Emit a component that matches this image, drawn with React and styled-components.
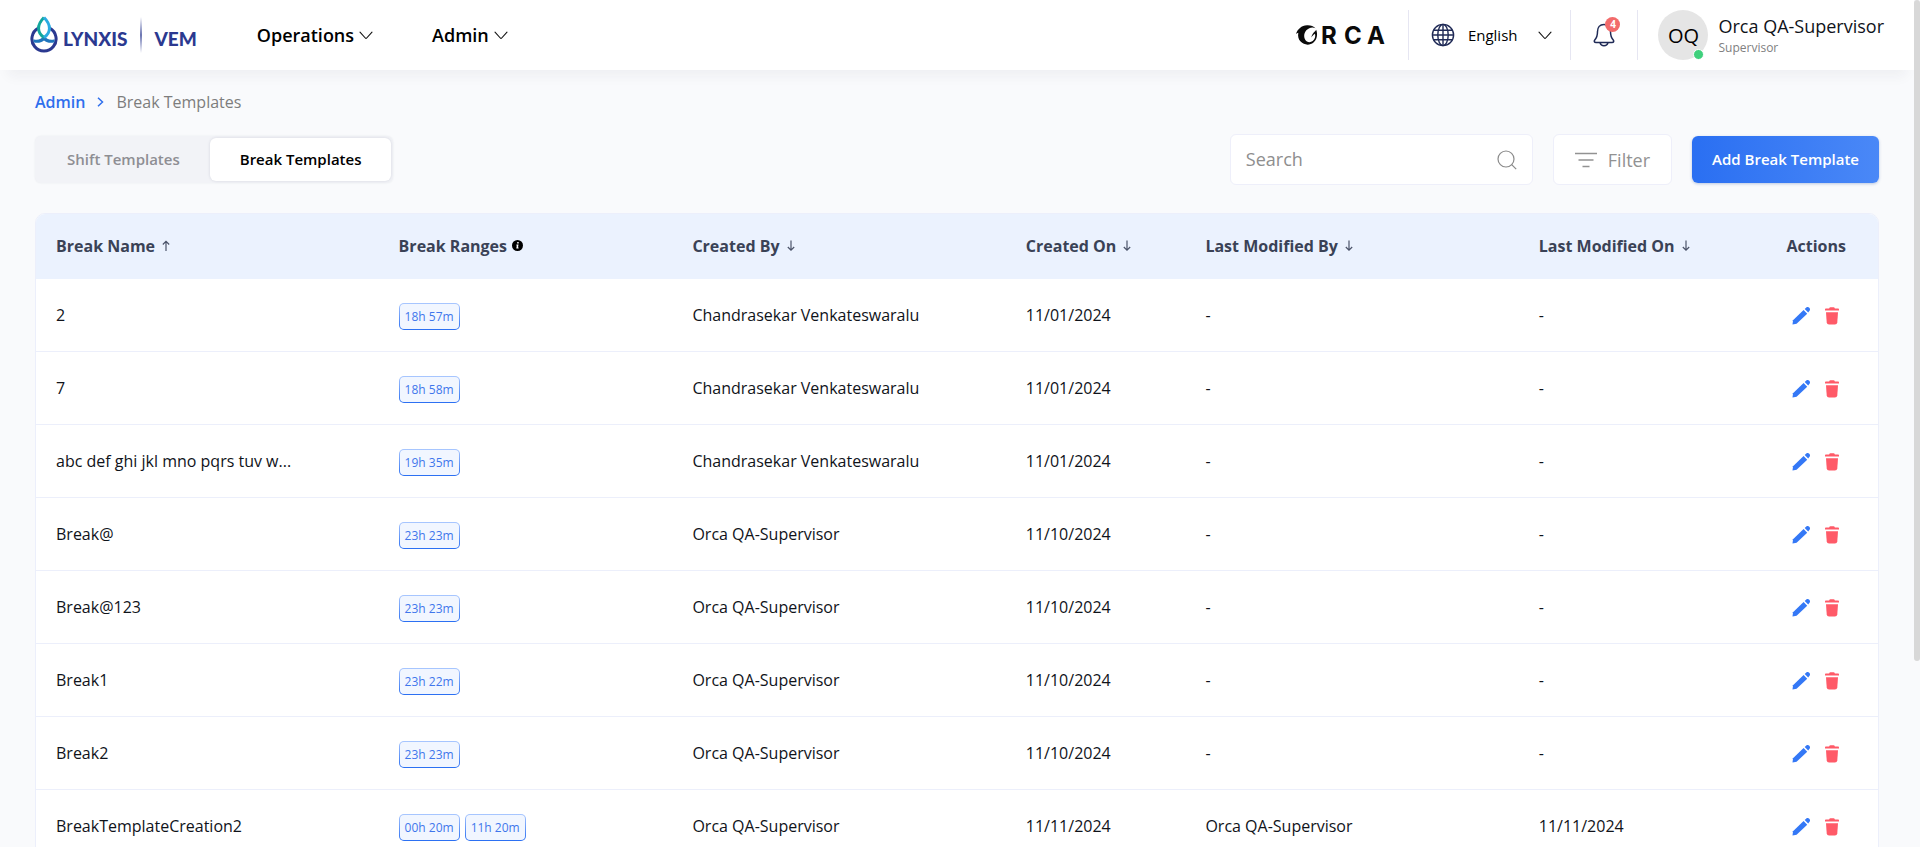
import React from "react";
import styled, { createGlobalStyle } from "styled-components";

const GlobalStyle = createGlobalStyle`
  *, *::before, *::after { box-sizing: border-box; }
  body {
    margin: 0;
    background: #f9fafc;
    color: #10131a;
    font-family: "Open Sans", "Noto Sans", sans-serif;
    font-size: 16px;
    line-height: 24px;
  }
  button, input { font: inherit; color: inherit; }
  button { border: 0; padding: 0; background: none; cursor: pointer; }
  a { color: inherit; text-decoration: none; }
  svg { display: block; flex: none; }
`;

const Shell = styled.div`
  height: 100vh;
  padding-right: 6px;
  overflow-y: auto;
  background: #f9fafc;
  scrollbar-width: none;
`;

const ScrollThumb = styled.div`
  position: fixed;
  top: 0;
  right: 0;
  width: 6px;
  height: 78vh;
  border-radius: 3px;
  background: #d8d8d8;
`;

const Header = styled.header`
  display: flex;
  align-items: center;
  height: 70px;
  padding: 0 30px;
  background: #fff;
  box-shadow: 0 14px 12px -8px rgba(30, 40, 60, 0.05);
`;

const Brand = styled.a`
  display: flex;
  align-items: center;
  color: #2b3990;
`;

const BrandWord = styled.span`
  padding: 8px 0 0 5px;
  font-family: Lato, sans-serif;
  font-size: 19px;
  font-weight: 900;
`;

const BrandRule = styled.span`
  width: 2px;
  height: 36px;
  margin: 0 7px 0 13px;
  background: linear-gradient(#fff, #2b3990, #fff);
  opacity: 0.7;
`;

const Nav = styled.nav`
  display: flex;
  gap: 59px;
  margin: 0 auto 0 60px;
`;

const NavButton = styled.button`
  display: flex;
  align-items: center;
  gap: 5px;
  color: #000;
  font-size: 18px;
  font-weight: 600;
`;

const CustomerLogo = styled.div`
  display: flex;
  align-items: center;
  padding-right: 21px;
`;

const HeaderCell = styled.div`
  display: flex;
  align-items: center;
  height: 50px;
  padding: 0 22px;
  border-left: 1px solid #e6e6f2;
`;

const LanguageCell = styled(HeaderCell)`
  padding-right: 18px;
`;

const ProfileCell = styled(HeaderCell)`
  padding: 0 0 0 20px;
`;

const Language = styled.button`
  display: flex;
  align-items: center;
  gap: 13px;
  color: #000;
  font-size: 15px;
  font-weight: 500;
  svg:last-child { margin-left: 8px; }
`;

const BellButton = styled.button`
  position: relative;
`;

const Count = styled.span`
  position: absolute;
  top: -6px;
  right: -5px;
  width: 15px;
  height: 15px;
  border-radius: 50%;
  background: #f26b6b;
  color: #fff;
  font-size: 10px;
  font-weight: 700;
  line-height: 15px;
  text-align: center;
`;

const Avatar = styled.div`
  position: relative;
  width: 50px;
  height: 50px;
  border-radius: 50%;
  background: #e5e5e5;
  color: #000;
  font-size: 20px;
  line-height: 52px;
  text-align: center;
`;

const Presence = styled.span`
  position: absolute;
  right: 4px;
  bottom: 0;
  width: 11px;
  height: 11px;
  border: 1px solid #fff;
  border-radius: 50%;
  background: #3fd07c;
`;

const Profile = styled.div`
  display: flex;
  flex-direction: column;
  padding: 2px 0 0 10px;
`;

const ProfileName = styled.span`
  font-size: 18px;
  font-weight: 500;
`;

const ProfileRole = styled.span`
  color: #808080;
  font-size: 12px;
  font-weight: 500;
  line-height: 20px;
`;

const Main = styled.main`
  padding: 20px 35px 221px;
`;

const Breadcrumb = styled.nav`
  display: flex;
  align-items: center;
  gap: 12px;
  color: #7d7d7d;
  a { color: #2f6fed; font-weight: 600; }
`;

const Toolbar = styled.div`
  display: flex;
  align-items: center;
  gap: 20px;
  margin: 20px 0 28px;
`;

const Tabs = styled.div`
  display: flex;
  height: 47px;
  margin-right: auto;
  padding: 2px;
  border-radius: 6px;
  background: #f2f3f7;
  box-shadow: 0 0 2px rgba(40, 50, 80, 0.08);
`;

const Tab = styled.button`
  padding: 0 30px 2px;
  border-radius: 6px;
  background: ${(p) => (p.$active ? "#fff" : "transparent")};
  box-shadow: ${(p) => (p.$active ? "0 0 3px rgba(40, 50, 80, 0.15)" : "none")};
  color: ${(p) => (p.$active ? "#000" : "#8e8e93")};
  font-size: 15px;
  font-weight: 600;
`;

const SearchBox = styled.label`
  display: flex;
  align-items: center;
  width: 303px;
  height: 51px;
  padding: 0 15px;
  border: 1px solid #eeeffa;
  border-radius: 6px;
  background: #fff;
  input {
    flex: 1;
    min-width: 0;
    padding: 0 0 2px;
    border: 0;
    outline: 0;
    background: none;
    font-size: 18px;
  }
  input::placeholder { color: #8e8e8e; opacity: 1; }
`;

const FilterButton = styled.button`
  display: flex;
  align-items: center;
  gap: 11px;
  height: 51px;
  padding: 0 21px;
  border: 1px solid #eeeffa;
  border-radius: 6px;
  background: #fff;
  color: #929292;
  font-size: 18px;
  font-weight: 500;
`;

const PrimaryButton = styled.button`
  height: 47px;
  padding: 0 20px 2px;
  border-radius: 6px;
  background: linear-gradient(90deg, #2a6ff2, #4a88f7);
  box-shadow: 0 1px 3px rgba(40, 80, 160, 0.3);
  color: #fff;
  font-size: 15px;
  font-weight: 600;
`;

const Card = styled.section`
  overflow: hidden;
  border: 1px solid #eceffb;
  border-radius: 10px;
  background: #fff;
`;

const Table = styled.table`
  width: 100%;
  table-layout: fixed;
  border-collapse: separate;
  border-spacing: 0;
  text-align: left;
`;

const Th = styled.th`
  height: 65px;
  padding: 0 0 2px 20px;
  background: #ebf2fe;
  color: #3a4256;
  font-weight: 700;
  white-space: nowrap;
`;

const HeadLabel = styled.span`
  display: inline-flex;
  align-items: center;
  gap: 5px;
`;

const SortButton = styled.button`
  display: inline-flex;
  align-items: center;
  gap: 7px;
`;

const Td = styled.td`
  height: 73px;
  padding: 0 0 0 20px;
  border-bottom: 1px solid #eceffb;
  white-space: nowrap;
`;

const NameText = styled.div`
  max-width: 260px;
  overflow: hidden;
  text-overflow: ellipsis;
`;

const Badges = styled.div`
  display: flex;
  gap: 5px;
  padding-top: 3px;
`;

const Badge = styled.span`
  height: 27px;
  padding: 0 5px;
  border: 1px solid transparent;
  border-radius: 5px;
  background:
    linear-gradient(#f1f6ff, #f1f6ff) padding-box,
    linear-gradient(#a9c7ff, #2a6ff2) border-box;
  color: #3f76ec;
  font-size: 12px;
  line-height: 26px;
`;

const Actions = styled.div`
  display: flex;
  gap: 14px;
  padding: 2px 0 0 5px;
`;

const Chevron = () => (
  <svg width="14" height="9" viewBox="0 0 14 9" fill="none" stroke="#111" strokeWidth="1.1" strokeLinecap="round" strokeLinejoin="round">
    <path d="M1 1.2 6.3 7q.7.8 1.4 0L13 1.2" />
  </svg>
);

const DropMark = () => (
  <svg width="28" height="38" viewBox="0 0 28 38" fill="none">
    <path d="M8.4 12.200A12.100 12.100 0 1 0 19.600 12.200" stroke="#2b3990" strokeWidth="3" />
    <path d="M3.500 23.300c4.200 1.400 7.800-.2 10.500-3.200 2.700 3 6.300 4.600 10.500 3.200v3c-4 1.200-7.800.4-10.500-1.800-2.700 2.200-6.500 3-10.500 1.800z" fill="#1f75bc" />
    <path d="M14 1.500C6.500 9 7 16.500 14 21.500" stroke="#12a79d" strokeWidth="3" />
    <path d="M14 1.500C21.500 9 21 16.500 14 21.500" stroke="#2aabe2" strokeWidth="3" />
  </svg>
);

const OrcaLogo = () => (
  <svg width="92" height="40" viewBox="0 -8 92 40" role="img" aria-label="Orca">
    <path d="M1 11C2.500 6 6.500 2.500 12 2.200 15.500 2 18.500 3 20.500 5.200c-2.200-.9-4.500-.8-6.200.1C9.500 7.500 8.100 12.500 10.100 16.500c1.600 3 5 3.500 7.600 1.600 2.200-1.700 3-4.600 2.300-7.300-1.400 1-3 2.300-3.700 3.800.2-2.200 1.700-4.600 4-6.600l.9-1.300c1.800 4.600.8 9.800-2.700 12.800-3.800 3.200-9.500 2.700-12.900-.9C3.300 16 2.700 13 3.300 9.700 2.300 9.900 1.800 10.300 1 11z" fill="#0a0a0a" />
    <g fill="#0a0a0a" fontFamily="Inter, sans-serif" fontSize="24" fontWeight="700">
      <text x="26" y="21">R</text>
      <text x="49" y="21">C</text>
      <text x="72" y="21">A</text>
    </g>
  </svg>
);

const Globe = () => (
  <svg width="24" height="24" viewBox="0 0 24 24" fill="none" stroke="#1f2a56" strokeWidth="1.400">
    <circle cx="12" cy="12" r="10.600" />
    <ellipse cx="12" cy="12" rx="5.200" ry="10.600" />
    <path d="M12 1.400v21.200M2.500 7.200h19M1.400 12h21.200M2.500 16.800h19" />
  </svg>
);

const Bell = () => (
  <svg width="22" height="24" viewBox="0 0 22 24" fill="none" stroke="#1f2a56" strokeWidth="1.500" strokeLinejoin="round">
    <path d="M11 1.500C6.800 1.500 4.500 4.500 4.500 8.500c0 4.500-.8 6.300-2.600 8.200-1.300 1.500-.6 2.700 1.100 2.700h16c1.700 0 2.400-1.200 1.100-2.700-1.800-1.900-2.600-3.700-2.600-8.200 0-4-2.300-7-6.500-7z" />
    <path d="M7 19.600c.6 2.200 2 3.200 4 3.200s3.400-1 4-3.200" />
  </svg>
);

const Crumb = () => (
  <svg width="7" height="10" viewBox="0 0 7 10" fill="none" stroke="#2f6fed" strokeWidth="1.500">
    <path d="m1 .8 4.500 4.200L1 9.200" />
  </svg>
);

const SearchIcon = () => (
  <svg width="20" height="20" viewBox="0 0 20 20" fill="none" stroke="#8a8a8a" strokeWidth="1.200">
    <circle cx="9" cy="9" r="8" />
    <path d="m14.700 14.700 4.500 4.500" />
  </svg>
);

const FilterIcon = () => (
  <svg width="22" height="16" viewBox="0 0 22 16" fill="none" stroke="#929292" strokeWidth="1.700">
    <path d="M0 1.500h22M3.500 8h15M7.500 14.500h7" />
  </svg>
);

const SortArrow = ({ up }) => (
  <svg width="8" height="11" viewBox="0 0 8 11" fill="none" stroke="#4a5268" strokeWidth="1.200">
    <path d={up ? "M4 11V1.500M.8 4.500 4 1.400l3.200 3.100" : "M4 .5v9.500M.8 7 4 10.100 7.200 7"} />
  </svg>
);

const Info = () => (
  <svg width="11" height="11" viewBox="0 0 11 11">
    <circle cx="5.500" cy="5.500" r="5.500" fill="#000" />
    <path d="M5.200 2h1.500v1.400H5.200zM4.500 4.400h2L6 7.600h.7l-.2 1H4.300L4.800 5.400h-.5z" fill="#fff" />
  </svg>
);

const Pencil = () => (
  <svg width="19" height="18" viewBox="0 0 19 18" fill="#3478f6">
    <path d="M.5 17.500 1 13.200 11.600 3l3.600 3.700L4.600 16.800z" />
    <path d="m12.700 2 1.600-1.400c1-.8 2.200-.6 3 .2s1 2 .2 3L16.200 5.600z" />
  </svg>
);

const Trash = () => (
  <svg width="14" height="18" viewBox="0 0 14 18" fill="#ff5a68">
    <path d="M0 2.400q0-.8.800-.8h3.300Q4.500.300 5.400.300h3.200q.9 0 1.300 1.300h3.300q.8 0 .8.800v1H0z" />
    <path d="M1 5.200h12l-.7 10q-.2 2.400-2.400 2.400H4.100q-2.200 0-2.400-2.400z" />
  </svg>
);

const columns = [
  { label: "Break Name", width: "18.600%", sort: "up" },
  { label: "Break Ranges", width: "15.950%", info: true },
  { label: "Created By", width: "18.100%", sort: "down" },
  { label: "Created On", width: "9.750%", sort: "down" },
  { label: "Last Modified By", width: "18.100%", sort: "down" },
  { label: "Last Modified On", width: "13.450%", sort: "down" },
  { label: "Actions", width: "6.050%" },
];

const rows = [
  ["2", ["18h 57m"], "Chandrasekar Venkateswaralu", "11/01/2024", "-", "-"],
  ["7", ["18h 58m"], "Chandrasekar Venkateswaralu", "11/01/2024", "-", "-"],
  ["abc def ghi jkl mno pqrs tuv w...", ["19h 35m"], "Chandrasekar Venkateswaralu", "11/01/2024", "-", "-"],
  ["Break@", ["23h 23m"], "Orca QA-Supervisor", "11/10/2024", "-", "-"],
  ["Break@123", ["23h 23m"], "Orca QA-Supervisor", "11/10/2024", "-", "-"],
  ["Break1", ["23h 22m"], "Orca QA-Supervisor", "11/10/2024", "-", "-"],
  ["Break2", ["23h 23m"], "Orca QA-Supervisor", "11/10/2024", "-", "-"],
  ["BreakTemplateCreation2", ["00h 20m", "11h 20m"], "Orca QA-Supervisor", "11/11/2024", "Orca QA-Supervisor", "11/11/2024"],
];

export default function App() {
  return (
    <Shell>
      <GlobalStyle />
      <ScrollThumb />
      <Header>
        <Brand href="#">
          <DropMark />
          <BrandWord>LYNXIS</BrandWord>
          <BrandRule />
          <BrandWord>VEM</BrandWord>
        </Brand>
        <Nav>
          <NavButton>Operations <Chevron /></NavButton>
          <NavButton>Admin <Chevron /></NavButton>
        </Nav>
        <CustomerLogo><OrcaLogo /></CustomerLogo>
        <LanguageCell>
          <Language><Globe />English<Chevron /></Language>
        </LanguageCell>
        <HeaderCell>
          <BellButton aria-label="Notifications"><Bell /><Count>4</Count></BellButton>
        </HeaderCell>
        <ProfileCell>
          <Avatar>OQ<Presence /></Avatar>
          <Profile>
            <ProfileName>Orca QA-Supervisor</ProfileName>
            <ProfileRole>Supervisor</ProfileRole>
          </Profile>
        </ProfileCell>
      </Header>
      <Main>
        <Breadcrumb aria-label="Breadcrumb">
          <a href="#">Admin</a>
          <Crumb />
          <span>Break Templates</span>
        </Breadcrumb>
        <Toolbar>
          <Tabs role="tablist">
            <Tab role="tab" aria-selected="false">Shift Templates</Tab>
            <Tab role="tab" aria-selected="true" $active>Break Templates</Tab>
          </Tabs>
          <SearchBox>
            <input type="text" placeholder="Search" aria-label="Search" />
            <SearchIcon />
          </SearchBox>
          <FilterButton><FilterIcon />Filter</FilterButton>
          <PrimaryButton>Add Break Template</PrimaryButton>
        </Toolbar>
        <Card>
          <Table>
            <colgroup>
              {columns.map((c) => <col key={c.label} width={c.width} />)}
            </colgroup>
            <thead>
              <tr>
                {columns.map((c) => (
                  <Th key={c.label} scope="col">
                    {c.sort ? (
                      <SortButton>{c.label}<SortArrow up={c.sort === "up"} /></SortButton>
                    ) : (
                      <HeadLabel>{c.label}{c.info && <Info />}</HeadLabel>
                    )}
                  </Th>
                ))}
              </tr>
            </thead>
            <tbody>
              {rows.map(([name, ranges, by, on, modBy, modOn]) => (
                <tr key={name}>
                  <Td><NameText>{name}</NameText></Td>
                  <Td><Badges>{ranges.map((r) => <Badge key={r}>{r}</Badge>)}</Badges></Td>
                  <Td>{by}</Td>
                  <Td>{on}</Td>
                  <Td>{modBy}</Td>
                  <Td>{modOn}</Td>
                  <Td>
                    <Actions>
                      <button aria-label={`Edit ${name}`}><Pencil /></button>
                      <button aria-label={`Delete ${name}`}><Trash /></button>
                    </Actions>
                  </Td>
                </tr>
              ))}
            </tbody>
          </Table>
        </Card>
      </Main>
    </Shell>
  );
}
